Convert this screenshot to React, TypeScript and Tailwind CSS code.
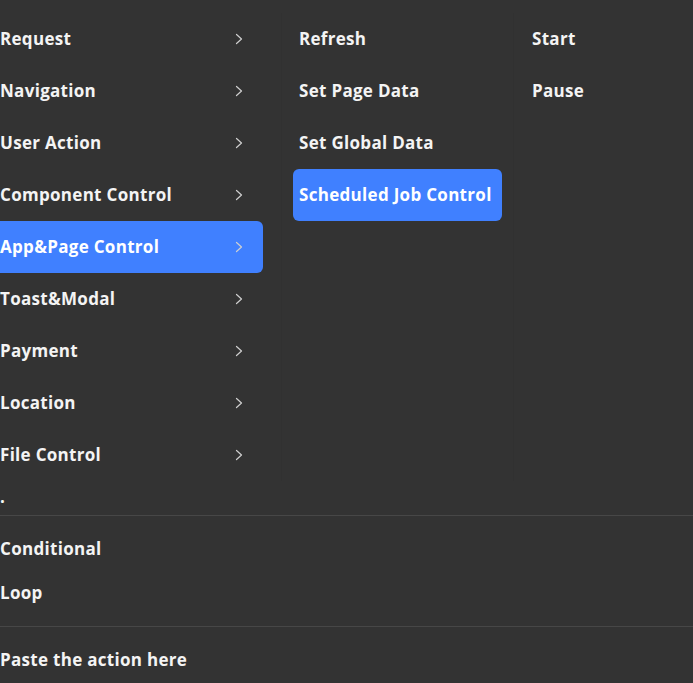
import React from "react";

const font = { fontFamily: '"Open Sans", "Noto Sans", sans-serif' };

function Chevron() {
  return (
    <svg width="10" height="12" viewBox="0 0 10 12" className="shrink-0">
      <polyline points="2.5,1.5 7.5,6 2.5,10.5" fill="none" stroke="#cfcfcf" strokeWidth="1.2" strokeLinecap="round" strokeLinejoin="round" />
    </svg>
  );
}

const col1 = [
  "Request",
  "Navigation",
  "User Action",
  "Component Control",
  "App&Page Control",
  "Toast&Modal",
  "Payment",
  "Location",
  "File Control",
];
const col2 = ["Refresh", "Set Page Data", "Set Global Data", "Scheduled Job Control"];
const col3 = ["Start", "Pause"];

export default function App() {
  return (
    <div className="w-[693px] h-[683px] bg-[#333333] text-[#f4f4f4] font-bold text-[17px] tracking-[0.3px] overflow-hidden" style={font}>
      <div className="flex pt-[13px]">
        <div className="w-[269px] -ml-[6px] mr-[18px] shrink-0">
          {col1.map((t) => {
            const active = t === "App&Page Control";
            return (
              <div
                key={t}
                className={`h-[52px] flex items-center justify-between pl-[6px] pr-[19px] rounded-[6px] ${active ? "bg-[#4080ff] text-white" : ""}`}
              >
                <span>{t}</span>
                <Chevron />
              </div>
            );
          })}
        </div>
        <div className="w-[232px] shrink-0 border-l border-[#313131] pl-[11px]">
          {col2.map((t) => {
            const active = t === "Scheduled Job Control";
            return (
              <div key={t} className={`h-[52px] flex items-center w-[209px] px-[6px] rounded-[6px] ${active ? "bg-[#4080ff] text-white" : ""}`}>
                <span className="whitespace-nowrap">{t}</span>
              </div>
            );
          })}
        </div>
        <div className="flex-1 border-l border-[#313131] pl-[12px]">
          {col3.map((t) => (
            <div key={t} className="h-[52px] flex items-center px-[6px]">
              {t}
            </div>
          ))}
        </div>
      </div>
      <div className="h-[32px] flex items-center">.</div>
      <div className="mt-[2px] border-t border-[#474747] py-[11px]">
        <div className="h-[44px] flex items-center">Conditional</div>
        <div className="h-[44px] flex items-center">Loop</div>
      </div>
      <div className="border-t border-[#474747] pt-[11px]">
        <div className="h-[44px] flex items-center">Paste the action here</div>
      </div>
    </div>
  );
}
